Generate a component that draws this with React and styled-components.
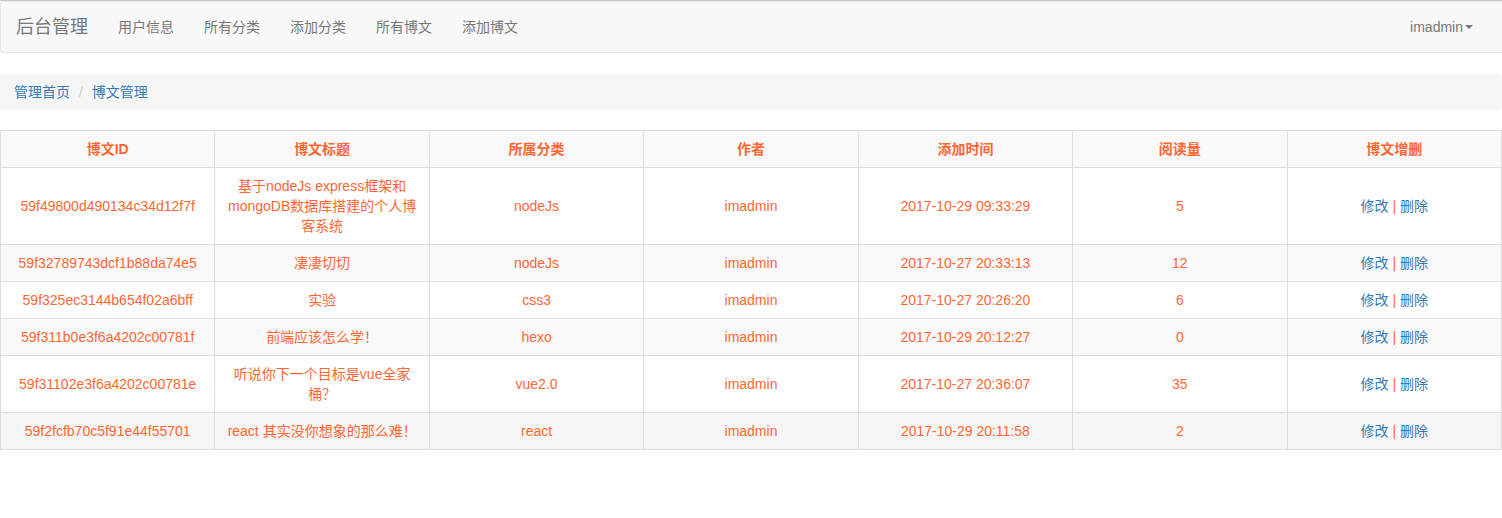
import React from "react";
import styled, { createGlobalStyle } from "styled-components";

const posts = [
  {
    id: "59f49800d490134c34d12f7f",
    title: "基于nodeJs express框架和mongoDB数据库搭建的个人博客系统",
    category: "nodeJs",
    author: "imadmin",
    time: "2017-10-29 09:33:29",
    views: 5,
  },
  {
    id: "59f32789743dcf1b88da74e5",
    title: "凄凄切切",
    category: "nodeJs",
    author: "imadmin",
    time: "2017-10-27 20:33:13",
    views: 12,
  },
  {
    id: "59f325ec3144b654f02a6bff",
    title: "实验",
    category: "css3",
    author: "imadmin",
    time: "2017-10-27 20:26:20",
    views: 6,
  },
  {
    id: "59f311b0e3f6a4202c00781f",
    title: "前端应该怎么学！",
    category: "hexo",
    author: "imadmin",
    time: "2017-10-29 20:12:27",
    views: 0,
  },
  {
    id: "59f31102e3f6a4202c00781e",
    title: "听说你下一个目标是vue全家桶？",
    category: "vue2.0",
    author: "imadmin",
    time: "2017-10-27 20:36:07",
    views: 35,
  },
  {
    id: "59f2fcfb70c5f91e44f55701",
    title: "react 其实没你想象的那么难！",
    category: "react",
    author: "imadmin",
    time: "2017-10-29 20:11:58",
    views: 2,
  },
];

const navLinks = ["用户信息", "所有分类", "添加分类", "所有博文", "添加博文"];
const headers = ["博文ID", "博文标题", "所属分类", "作者", "添加时间", "阅读量", "博文增删"];

function App() {
  return (
    <>
      <GlobalStyle />
      <Page>
        <Navbar>
          <NavLeft>
            <Brand href="#">后台管理</Brand>
            <NavList>
              {navLinks.map((t) => (
                <NavItem key={t} href="#">
                  {t}
                </NavItem>
              ))}
            </NavList>
          </NavLeft>
          <UserMenu href="#">
            imadmin
            <Caret />
          </UserMenu>
        </Navbar>

        <Breadcrumb>
          <Crumb href="#">管理首页</Crumb>
          <Divider>/{"\u00a0"}</Divider>
          <Crumb href="#">博文管理</Crumb>
        </Breadcrumb>

        <Table>
          <tbody>
            <Row $shade="#f9f9f9">
              {headers.map((h) => (
                <Th key={h}>{h}</Th>
              ))}
            </Row>
            {posts.map((p, i) => (
              <Row
                key={p.id}
                $shade={i === 5 ? "#f5f5f5" : i % 2 === 1 ? "#f9f9f9" : "#fff"}
              >
                <Td>{p.id}</Td>
                <Td>{p.title}</Td>
                <Td>{p.category}</Td>
                <Td>{p.author}</Td>
                <Td>{p.time}</Td>
                <Td>{p.views}</Td>
                <Td>
                  <ActionLink href="#">修改</ActionLink> |{" "}
                  <ActionLink href="#">删除</ActionLink>
                </Td>
              </Row>
            ))}
          </tbody>
        </Table>
      </Page>
    </>
  );
}

export default App;

const GlobalStyle = createGlobalStyle`
  * { box-sizing: border-box; }
  body {
    margin: 0;
    background: #fff;
    font-family: "Liberation Sans", "Noto Sans CJK SC", sans-serif;
    font-size: 14px;
    line-height: 20px;
    color: #333;
  }
  a { text-decoration: none; }
`;

const Page = styled.div`
  border-top: 1px solid #c9c9c9;
`;

const Navbar = styled.nav`
  display: flex;
  justify-content: space-between;
  align-items: stretch;
  min-height: 50px;
  background: #f8f8f8;
  border: 1px solid #e7e7e7;
  border-right: none;
  border-radius: 4px 0 0 4px;
  margin-bottom: 21px;
`;

const NavLeft = styled.div`
  display: flex;
`;

const Brand = styled.a`
  padding: 15px;
  font-size: 18px;
  line-height: 20px;
  color: #777;
`;

const NavList = styled.div`
  display: flex;
`;

const NavItem = styled.a`
  display: flex;
  align-items: center;
  padding: 15px;
  color: #777;
  line-height: 20px;
`;

const UserMenu = styled(NavItem)`
  margin-right: 14px;
`;

const Caret = styled.span`
  display: inline-block;
  width: 0;
  height: 0;
  margin-left: 2px;
  border-top: 4px solid #777;
  border-left: 4px solid transparent;
  border-right: 4px solid transparent;
`;

const Breadcrumb = styled.div`
  padding: 8px 14px;
  margin-bottom: 20px;
  background: #f5f5f5;
  border-radius: 4px;
`;

const Crumb = styled.a`
  color: #337ab7;
`;

const Divider = styled.span`
  padding: 0 5px 0 9px;
  color: #ccc;
`;

const Table = styled.table`
  width: 100%;
  table-layout: fixed;
  border-collapse: collapse;
  border: 1px solid #ddd;
  color: #ff6633;
`;

const Row = styled.tr`
  background: ${({ $shade }) => $shade};
`;

const Th = styled.th`
  padding: 8px;
  border: 1px solid #ddd;
  font-weight: bold;
  text-align: center;
  vertical-align: middle;
  line-height: 20px;
`;

const Td = styled.td`
  padding: 8px;
  border: 1px solid #ddd;
  text-align: center;
  vertical-align: middle;
  line-height: 20px;
`;

const ActionLink = styled.a`
  color: #337ab7;
`;
